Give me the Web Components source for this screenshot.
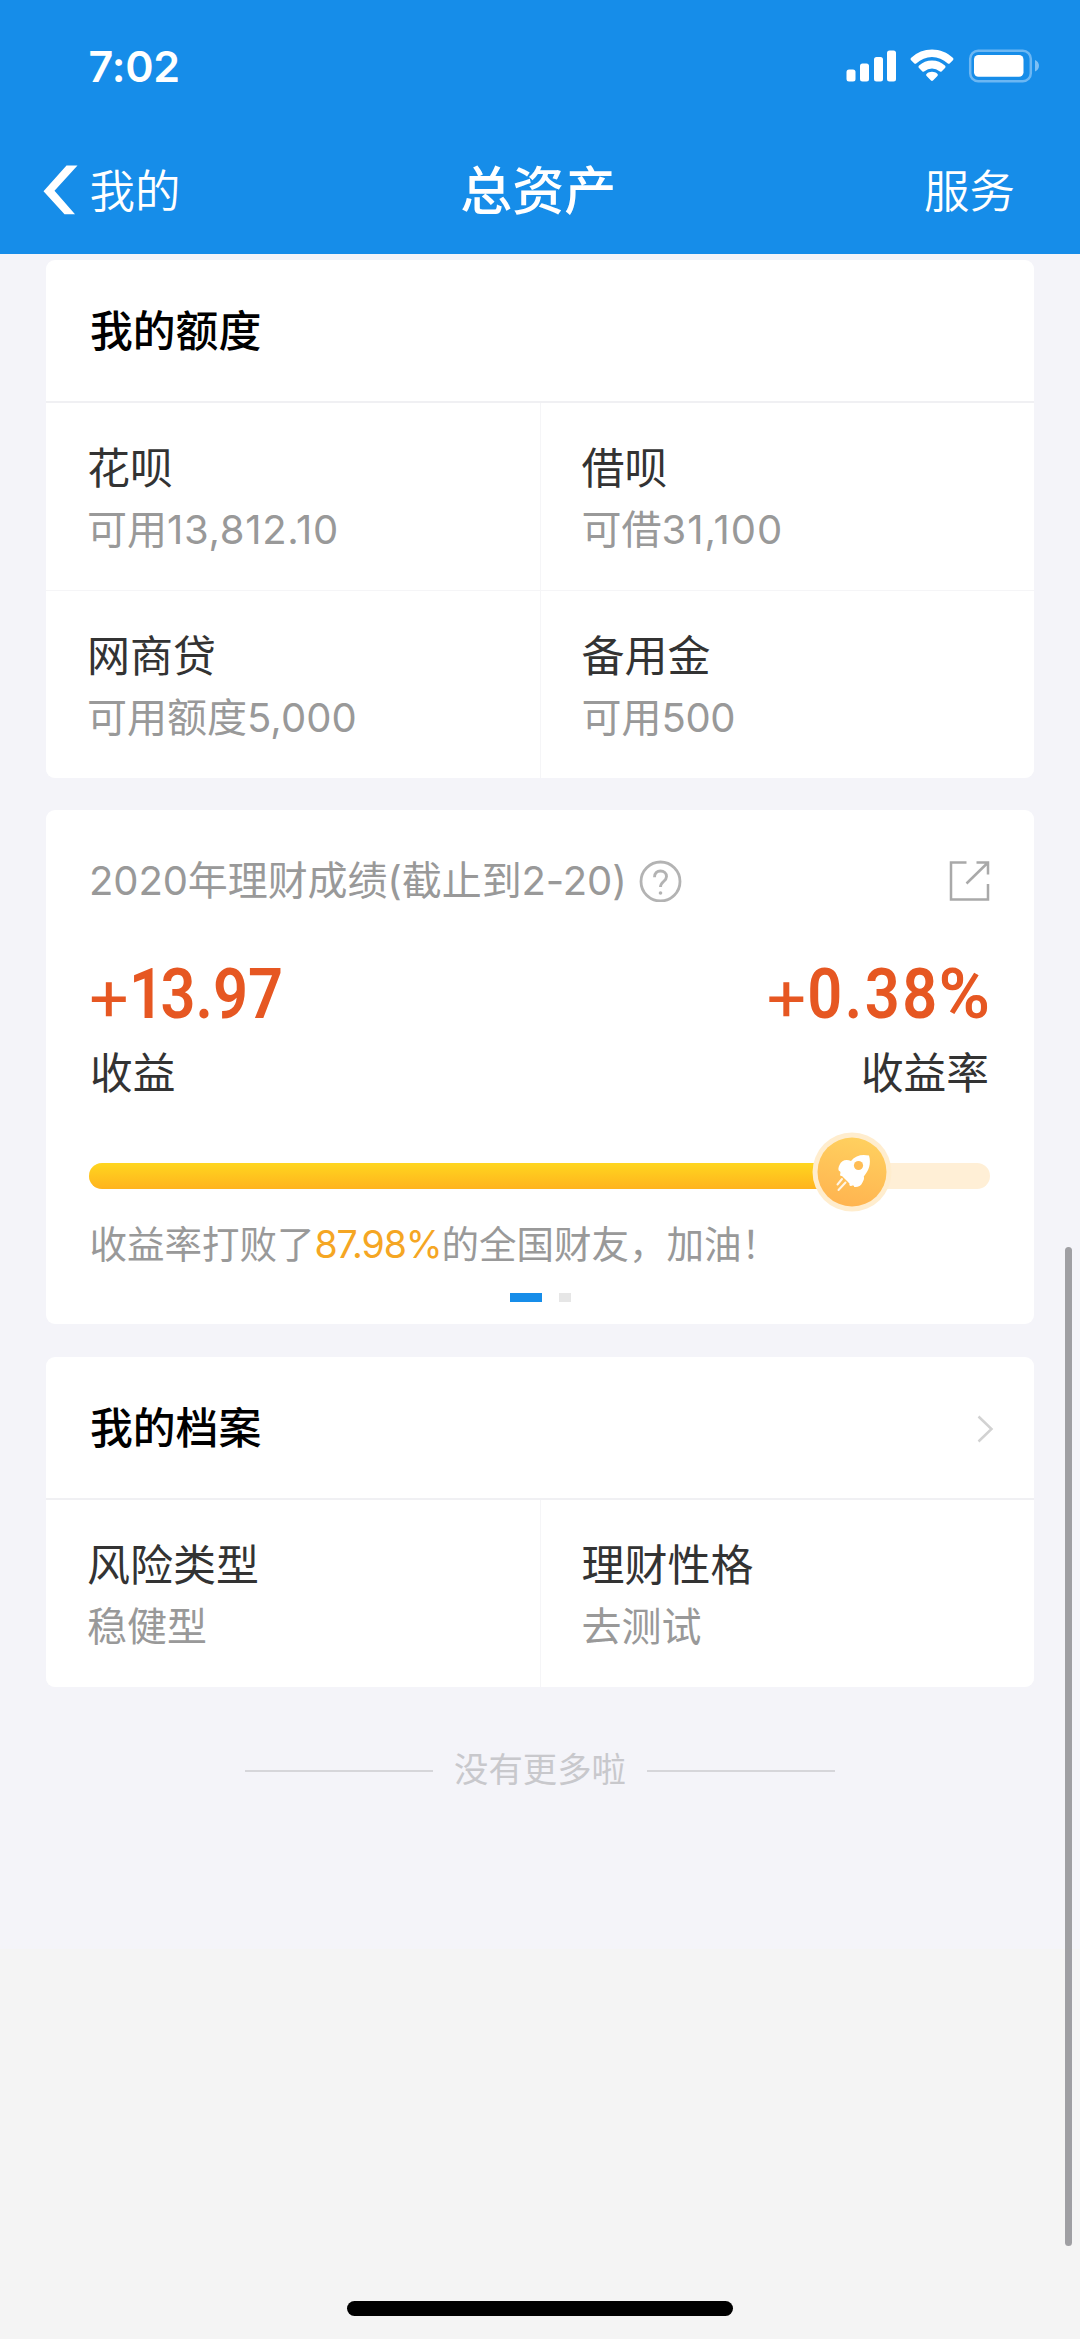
<!DOCTYPE html>
<html lang="zh-CN">
<head>
<meta charset="utf-8">
<title>总资产</title>
<style>
  html, body { margin: 0; padding: 0; }
  body {
    width: 1080px; height: 2339px; overflow: hidden; background: #f4f4f4;
    font-family: Inter, "Noto Sans CJK SC", sans-serif;
  }
  .n1 { letter-spacing: .7px; }
  .n2 { letter-spacing: 1px; }
  .n3 { letter-spacing: .1px; }
  .n4 { letter-spacing: -.4px; }
</style>
</head>
<body>
<asset-app>
  <status-bar time="7:02"></status-bar>
  <nav-bar back="我的" action="服务">总资产</nav-bar>
  <info-card heading="我的额度">
    <info-cell label="花呗">可用<span class="n1">13,812.10</span></info-cell>
    <info-cell label="借呗">可借<span class="n2">31,100</span></info-cell>
    <info-cell label="网商贷">可用额度<span class="n3">5,000</span></info-cell>
    <info-cell label="备用金">可用<span class="n4">500</span></info-cell>
  </info-card>
  <score-card></score-card>
  <info-card heading="我的档案" link>
    <info-cell label="风险类型">稳健型</info-cell>
    <info-cell label="理财性格">去测试</info-cell>
  </info-card>
  <end-note>没有更多啦</end-note>
</asset-app>

<script>
const define = (name, render) => customElements.define(name, class extends HTMLElement {
  connectedCallback() {
    if (this.shadowRoot) return;
    this.attachShadow({ mode: 'open' }).innerHTML = render(this);
  }
});

define('asset-app', () => `
  <style>
    :host { display: block; position: relative; width: 1080px; height: 2339px; overflow: hidden;
      background: linear-gradient(#f4f4f9 1949px, #f4f4f4 1949px); }
    main { display: flex; flex-direction: column; }
    .scroll { position: absolute; left: 1065px; top: 1247px; width: 6.5px; height: 999px; border-radius: 4px; background: #9f9fa3; }
    .home { position: absolute; left: 347px; top: 2301px; width: 386px; height: 14.5px; border-radius: 8px; background: #000; }
  </style>
  <main><slot></slot></main>
  <div class="scroll"></div><div class="home"></div>`);

define('status-bar', el => `
  <style>
    :host { display: flex; justify-content: space-between; align-items: center; box-sizing: border-box;
      height: 132px; padding: 0 40px 0 88.500px; background: #168de9; color: #fff; }
    .time { font-size: 43px; font-weight: 600; line-height: 50px; letter-spacing: -.2px; }
    svg { display: block; }
  </style>
  <span class="time">${el.getAttribute('time')}</span>
  <svg width="194" height="36" viewBox="846 48.5 194 36" fill="#fff">
    <rect x="846.5" y="70" width="9" height="12" rx="2.5"/><rect x="860" y="64" width="9" height="18" rx="2.5"/>
    <rect x="874" y="57.5" width="9" height="24.5" rx="2.5"/><rect x="887" y="51" width="9" height="31" rx="2.5"/>
    <path d="M932 50c8 0 15.300 3.100 20.800 8.200.8.700.8 1.800.1 2.500l-3 3c-.7.700-1.700.7-2.400 0a22.600 22.600 0 0 0-31 0c-.7.700-1.700.7-2.400 0l-3-3c-.7-.7-.7-1.800.1-2.500A30.500 30.500 0 0 1 932 50z"/>
    <path d="M932 61c5 0 9.500 1.900 12.900 5 .8.700.8 1.800.1 2.500l-3.200 3.200c-.7.700-1.600.7-2.300.1a11.300 11.300 0 0 0-15 0c-.7.600-1.600.6-2.300-.1L919 68.500c-.7-.7-.7-1.800.1-2.500 3.400-3.100 7.900-5 12.900-5z"/>
    <path d="M932 72.300c2 0 3.900.7 5.300 1.900.7.600.7 1.600.1 2.300l-4.400 4.500c-.6.600-1.400.6-2 0l-4.400-4.500c-.6-.7-.6-1.700.1-2.300 1.400-1.200 3.300-1.900 5.300-1.900z"/>
    <rect x="970.200" y="51.200" width="60.600" height="30.600" rx="8" fill="none" stroke="#6cb7f3" stroke-width="2.500"/>
    <rect x="974" y="55.500" width="49.500" height="21.800" rx="4.500"/>
    <path d="M1035 60.500c2.500 1 4 3.200 4 5.800s-1.500 4.800-4 5.800z" fill="#7dc0f5"/>
  </svg>`);

define('nav-bar', el => `
  <style>
    :host { display: grid; grid-template-columns: 1fr auto 1fr; align-items: center; box-sizing: border-box;
      height: 122px; padding: 0 65px 6px 43px; background: #168de9; color: #fff; font-size: 45.500px; line-height: 60px; }
    .back { display: flex; align-items: center; gap: 11.500px; }
    svg { display: block; }
    .title { font-size: 52px; font-weight: 500; margin-left: 18.500px; padding-top: 3px; }
    .action { text-align: right; }
    .txt { font-weight: 350; padding-top: 3px; }
  </style>
  <div class="back"><svg width="35" height="50" viewBox="0 0 35 50"><path d="M23.500.5H34.500L11.500 25.800 32 49.200H21.500L.5 26.200z" fill="#fff"/></svg><span class="txt">${el.getAttribute('back')}</span></div>
  <div class="title"><slot></slot></div>
  <div class="action txt">${el.getAttribute('action')}</div>`);

define('info-card', el => `
  <style>
    :host { display: block; margin: 0 46px; border-radius: 9px; background: #fff; overflow: hidden; }
    :host(:first-of-type) { margin-top: 6px; }
    header { display: flex; align-items: center; justify-content: space-between; box-sizing: border-box; height: 143px; padding: 3px 40px 0 44px;
      border-bottom: 2px solid #f0f0f3; font-size: 42.800px; line-height: 60px; font-weight: 500; color: #000; }
    svg { display: block; }
    .grid { display: grid; grid-template-columns: 1fr 1fr; gap: 1px; background: #f5f5f7; }
  </style>
  <header><span>${el.getAttribute('heading')}</span>${el.hasAttribute('link') ? '<svg width="17" height="28" viewBox="0 0 17 28"><path d="M1.500 1.500 14.500 14 1.500 26.500" fill="none" stroke="#d2d2d2" stroke-width="2.500"/></svg>' : ''}</header>
  <div class="grid"><slot></slot></div>`);

define('info-cell', el => `
  <style>
    :host { display: flex; flex-direction: column; gap: 6px; box-sizing: border-box; height: 187.200px; padding: 37px 0 0 41px; background: #fff; }
    .label { font-size: 43px; line-height: 56px; color: #333; }
    .sub { font-size: 40px; line-height: 56px; color: #999; }
  </style>
  <div class="label">${el.getAttribute('label')}</div>
  <div class="sub"><slot></slot></div>`);

define('score-figure', el => `
  <style>
    :host { display: flex; flex-direction: column; }
    :host([end]) { align-items: flex-end; }
    .num { display: flex; align-items: baseline; height: 76px; line-height: 76px; color: #e65722; }
    .plus { font: 400 72px/76px Inter, sans-serif; width: 44px; margin-left: -5px; transform: translateY(1px); }
    .val { font: 600 70.500px/76px Roboto, sans-serif; letter-spacing: 0; transform: translateY(-1.500px) scaleX(.87); transform-origin: 0 50%; }
    .one { letter-spacing: -4px; }
    .pct { display: inline-block; transform: scaleX(1.14); transform-origin: 100% 50%; margin-left: 6px; letter-spacing: 0; }
    :host([end]) .val { transform-origin: 100% 50%; letter-spacing: 2.800px; }
    :host([end]) .plus { transform: translate(26.500px, 1px); }
    .cap { margin-top: 13px; font-size: 42.700px; line-height: 60px; color: #333; }
    :host([end]) .cap { margin-right: 1px; }
  </style>
  <div class="num"><span class="plus">+</span><span class="val">${el.getAttribute('value').replace('1', '<span class="one">1</span>').replace('%', '<span class="pct">%</span>')}</span></div>
  <div class="cap"><slot></slot></div>`);

define('rocket-progress', () => `
  <style>
    :host { display: block; position: relative; width: 901px; height: 26px; border-radius: 13px; background: #ffefd6; }
    .fill { width: 762px; height: 26px; border-radius: 13px 0 0 13px; background: linear-gradient(#ffd61f, #ffb31e); }
    svg { position: absolute; left: 721.500px; top: -32px; }
  </style>
  <div class="fill"></div>
  <svg width="82" height="82" viewBox="0 0 82 82">
    <defs><linearGradient id="g" x1=".6" y1="0" x2=".4" y2="1"><stop offset="0" stop-color="#ffd05f"/><stop offset="1" stop-color="#ffb450"/></linearGradient></defs>
    <circle cx="41" cy="41" r="39.500" fill="#ffedce"/><circle cx="41" cy="41" r="34.500" fill="url(#g)"/>
    <path d="M58 24.500C50.500 23 44.500 24.500 40 30c-4.500-2-9.500-1-11.500 4-1.200 2.500-1.500 4.500-.5 6 1.500 0 1.800 1.500 1.200 3-.6 1.500.3 2 1.800 2l7.500 7.500c-.5 2 .5 3 2.200 2.300 1.300-.5 2.300-.2 2.500 1.200 3.500.5 6.800-1 8-4 1.200-2.200 2.400-4.500 1.600-6.500C57.500 40 60.500 33 58 24.500z" fill="#fff"/>
    <circle cx="47.500" cy="34.500" r="4.600" fill="#ffbd55"/>
    <path d="M31 48 26.500 53.500M34.500 51.500 27.500 59" fill="none" stroke="#fff" stroke-width="2" stroke-linecap="round" opacity=".85"/>
  </svg>`);

define('score-card', () => `
  <style>
    :host { display: flex; flex-direction: column; box-sizing: border-box; height: 514.500px; margin: 31.500px 46px 32.500px; padding: 42px 44px 0; border-radius: 9px; background: #fff; }
    .row { display: flex; align-items: center; justify-content: space-between; }
    .head { height: 58px; }
    .ttl { display: flex; align-items: center; gap: 12.500px; font-size: 40px; line-height: 58px; color: #999; margin-left: -1px; }
    .ttl span { letter-spacing: -.1px; }
    svg { display: block; }
    .figs { margin-top: 45px; height: 149px; }
    rocket-progress { margin: 59.500px 0 0 -1px; }
    .tip { margin: 27px 0 0 -.5px; font-size: 37.500px; line-height: 58px; color: #999; white-space: nowrap; }
    .tip b { font-weight: 400; color: #f5a623; letter-spacing: -1.100px; }
    .dots { display: flex; gap: 17px; margin: 18.500px 0 0 420px; }
    .dots i { width: 12px; height: 9px; background: #e6e6e6; }
    .dots i:first-child { width: 31.500px; background: #168de9; }
  </style>
  <div class="row head">
    <div class="ttl"><span>2020年理财成绩(截止到2-20)</span>
      <svg width="43" height="43" viewBox="0 0 43 43" fill="none" stroke="#b3b3b3" stroke-width="2.800"><circle cx="21.500" cy="22.500" r="19.500"/><path d="M15.500 18.200c0-4 2.500-6.200 6-6.200s6 2.200 6 5.400c0 5.200-6 5-6 10.600" stroke-width="2.900"/><circle cx="21.500" cy="34" r="1.800" fill="#b3b3b3" stroke="none"/></svg>
    </div>
    <svg width="42" height="42" viewBox="0 0 42 42" fill="none" stroke="#a9a9a9" stroke-width="2.500"><path d="M18.500 2.500H3V39.500H40V24M28.500 2.500H40V14.500M40 2.500 18.500 23.500"/></svg>
  </div>
  <div class="row figs"><score-figure value="13.97">收益</score-figure><score-figure end value="0.38%">收益率</score-figure></div>
  <rocket-progress></rocket-progress>
  <div class="tip">收益率打败了<b>87.98%</b>的全国财友，加油！</div>
  <div class="dots"><i></i><i></i></div>`);

define('end-note', () => `
  <style>
    :host { display: flex; justify-content: center; align-items: center; gap: 21.500px; margin-top: 58px; height: 50px;
      font-size: 34.400px; line-height: 50px; color: #c8c8cc; }
    i { width: 188px; height: 2px; margin-top: 2px; background: #d6d6da; }
  </style>
  <i></i><span><slot></slot></span><i></i>`);
</script>
</body>
</html>
